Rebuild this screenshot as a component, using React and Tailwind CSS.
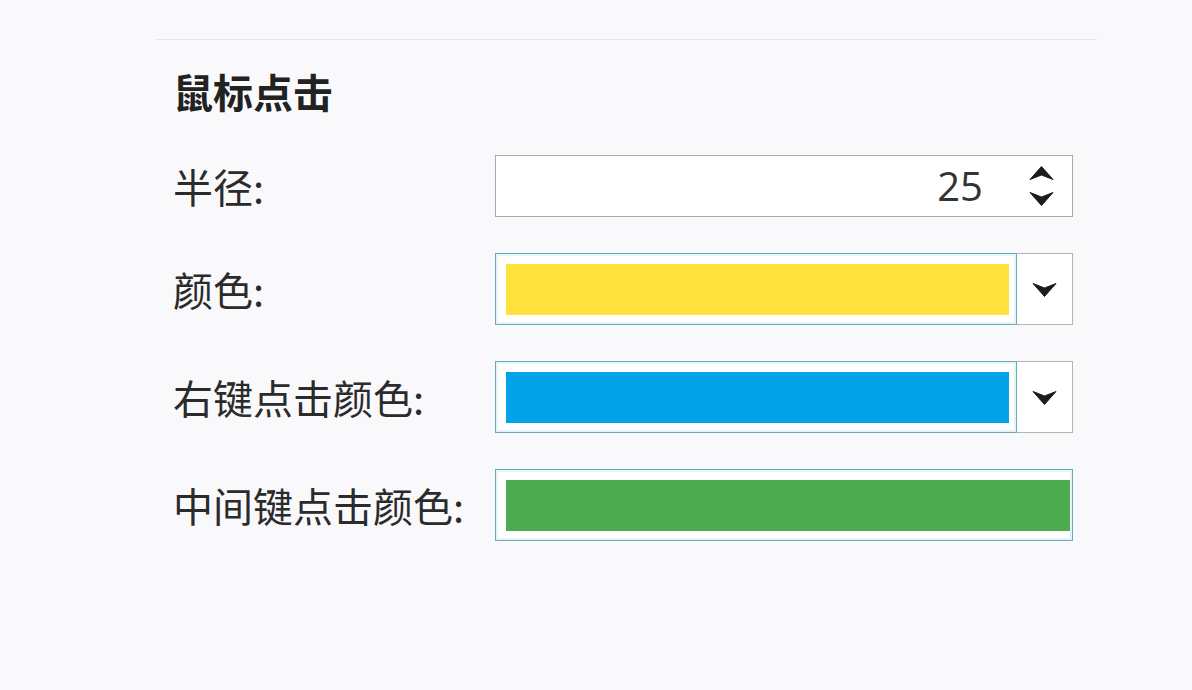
import React from 'react';

const font = { fontFamily: '"Noto Sans CJK SC", "Noto Sans", sans-serif' };

const ArrowDown = ({ className = '' }) => (
    <svg width="25" height="15" viewBox="0 0 25 15" className={className}>
        <path d="M1 1.5 L12.5 6 L24 1.5 L12.5 14.5 Z" fill="#1c1c1c" stroke="#1c1c1c" strokeWidth="1" strokeLinejoin="round" />
    </svg>
);

const ArrowUp = ({ className = '' }) => (
    <svg width="25" height="15" viewBox="0 0 25 15" className={className}>
        <path d="M1 13.5 L12.5 9 L24 13.5 L12.5 0.5 Z" fill="#1c1c1c" stroke="#1c1c1c" strokeWidth="1" strokeLinejoin="round" />
    </svg>
);

const Label = ({ children }) => (
    <div className="w-[322px] text-[40px] leading-[48px] text-[#2b2b2b]">{children}</div>
);

const ColorSelect = ({ color, withButton = true }) => (
    <div className="flex h-[72px] w-[578px] bg-white">
        <div
            className={`flex flex-1 items-center border border-[#6fa9b8] shadow-[inset_0_0_0_2px_#e3f4fa] pl-[10px] ${withButton ? 'pr-[7px]' : 'pr-[2px]'}`}
        >
            <div className={`h-[51px] w-full ${color}`} />
        </div>
        {withButton && (
            <div className="flex w-[56px] items-center justify-center border border-l-0 border-[#b4b4b4]">
                <ArrowDown />
            </div>
        )}
    </div>
);

export default function App() {
    return (
        <div className="min-h-[690px] bg-[#f9f9fb] pt-[39px]" style={font}>
            <div className="ml-[155px] w-[942px] border-t border-[#e7e7ec] pl-[18px] pt-[26px]">
                <div className="h-[50px] text-[40px] font-bold leading-[50px] text-[#222]">鼠标点击</div>

                <div className="mt-[39px] flex flex-col gap-[36px]">
                    <div className="flex items-center">
                        <Label>半径:</Label>
                        <div className="flex h-[62px] w-[578px] items-center justify-end border border-[#a9a9a9] bg-white pr-[18px]">
                            <span
                                className="mr-[46px] text-[40px] leading-none text-[#333]"
                                style={{ fontFamily: '"Open Sans", "Noto Sans", sans-serif' }}
                            >
                                25
                            </span>
                            <div className="flex flex-col items-center gap-[10px]">
                                <ArrowUp />
                                <ArrowDown />
                            </div>
                        </div>
                    </div>

                    <div className="flex items-center">
                        <Label>颜色:</Label>
                        <ColorSelect color="bg-[#ffe23b]" />
                    </div>

                    <div className="flex items-center">
                        <Label>右键点击颜色:</Label>
                        <ColorSelect color="bg-[#03a3e9]" />
                    </div>

                    <div className="flex items-center">
                        <Label>中间键点击颜色:</Label>
                        <ColorSelect color="bg-[#4caa4f]" withButton={false} />
                    </div>
                </div>
            </div>
        </div>
    );
}
